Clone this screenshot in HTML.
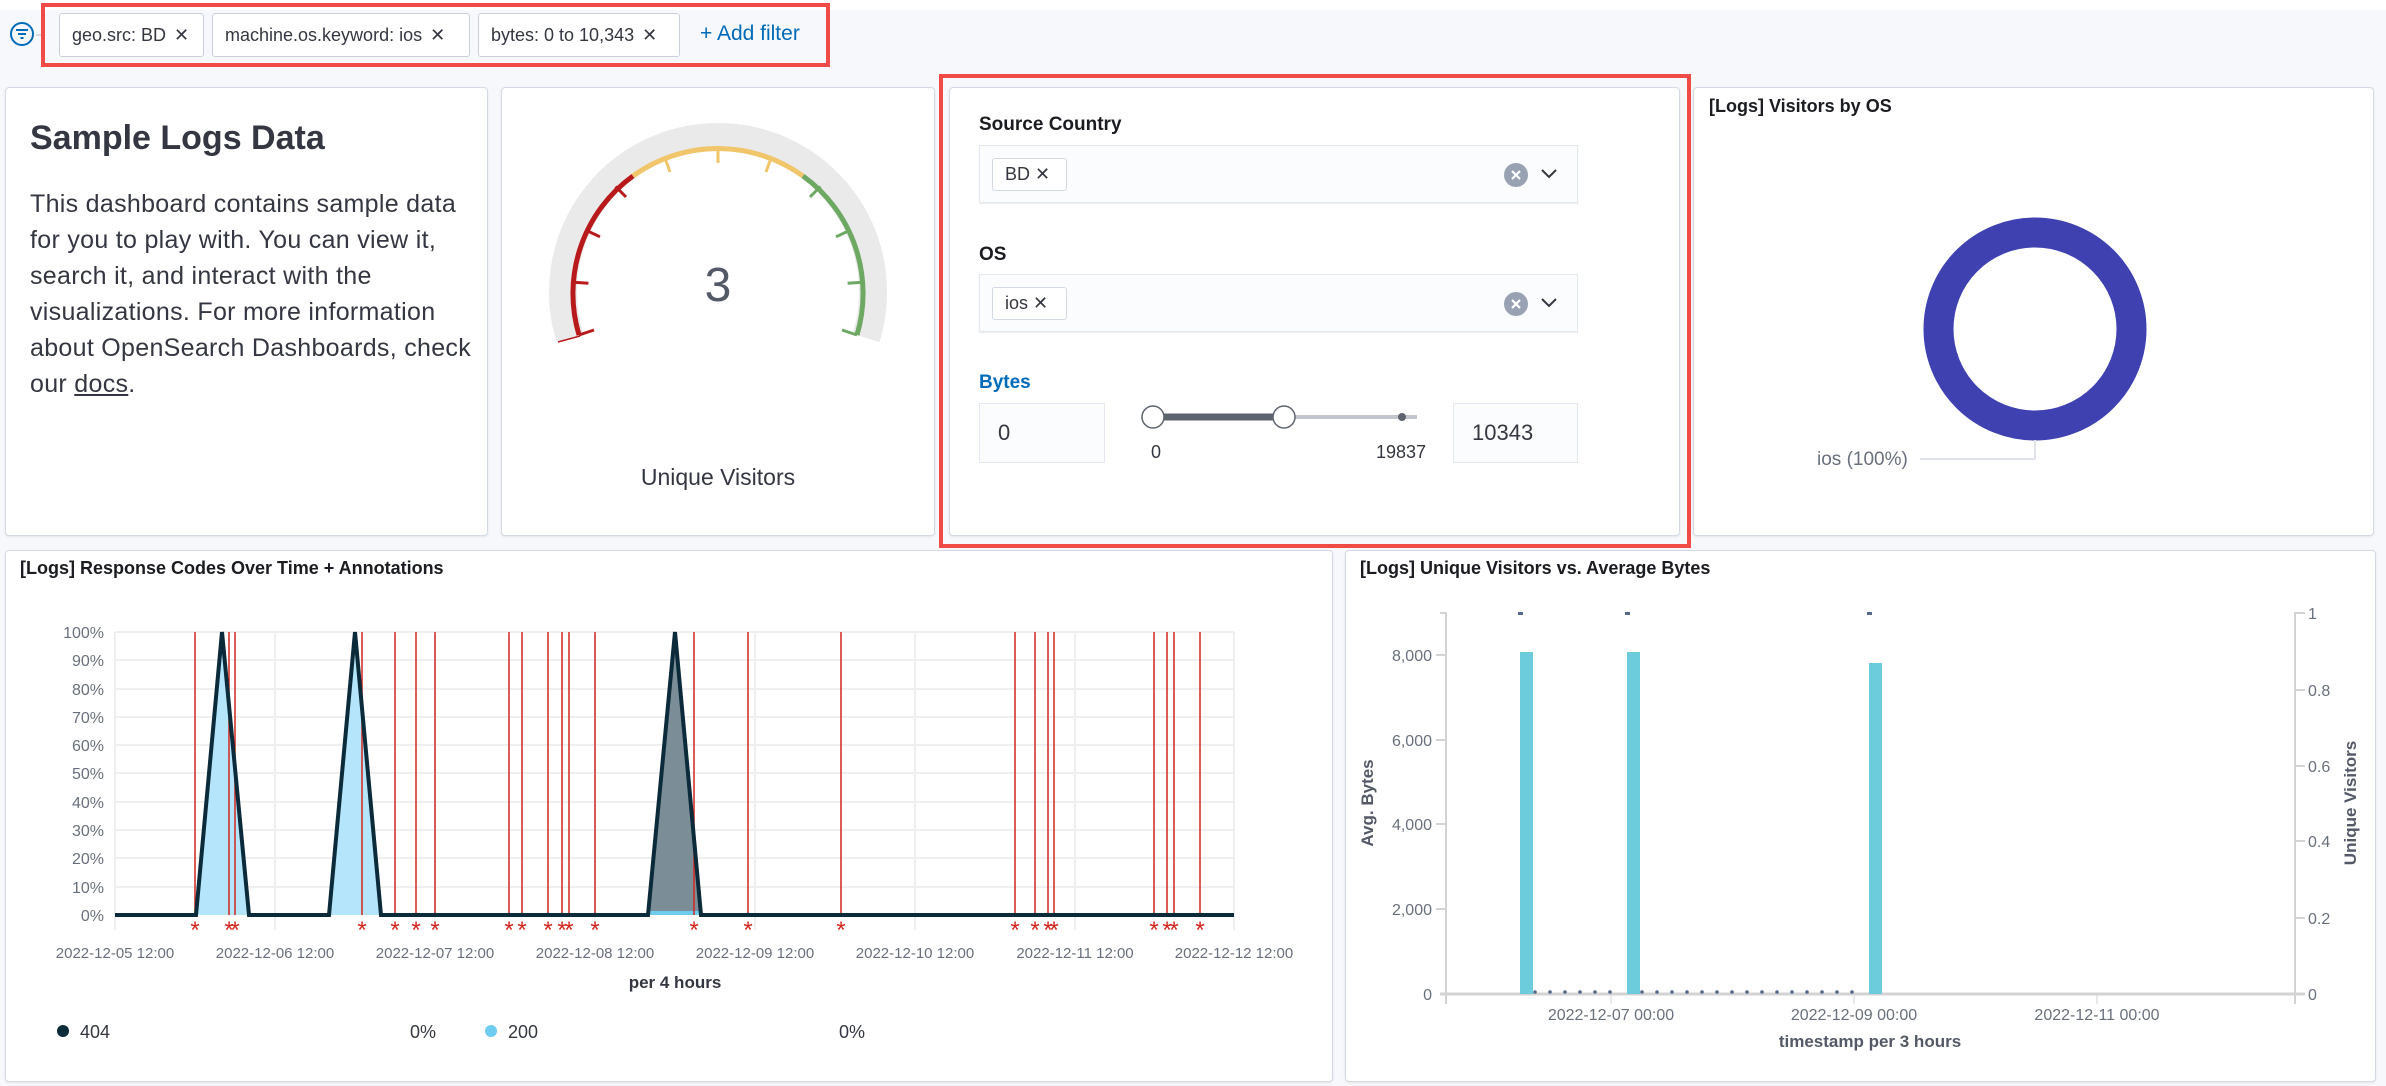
<!DOCTYPE html>
<html><head><meta charset="utf-8">
<style>
*{margin:0;padding:0;box-sizing:border-box}
body{width:2386px;height:1086px;background:#f7f8fc;font-family:"Liberation Sans",sans-serif;color:#343741;position:relative;overflow:hidden}
.abs{position:absolute}
.panel{position:absolute;background:#fff;border:1px solid #d3dae6;border-radius:4px;box-shadow:0 1px 2px rgba(0,0,0,.08)}
.pill{position:absolute;top:13px;height:44px;background:#fff;border:1px solid #c9d0dc;border-radius:3px;font-size:18px;line-height:42px;padding-left:12px;color:#343741;white-space:nowrap}
.pill span{margin-left:8px}
.ptitle{position:absolute;font-size:18px;font-weight:bold;color:#1a1c21}
.combo{position:absolute;left:979px;width:599px;height:58px;background:#fbfcfd;border:1px solid #e3e7ef;box-shadow:0 1px 1px rgba(0,0,0,.08)}
.tag{position:absolute;left:12px;top:12px;width:75px;height:33px;border:1px solid #d3dae6;background:#fff;border-radius:3px;font-size:18px;line-height:31px;padding-left:12px}
.inp{position:absolute;top:403px;height:60px;background:#fbfcfd;border:1px solid #e3e7ef;font-size:22px;line-height:58px;padding-left:18px}
.lbl{position:absolute;font-size:19px;font-weight:bold;color:#1a1c21}
</style></head><body>
<div class="abs" style="left:0;top:0;width:2386px;height:10px;background:#fff"></div>
<svg class="abs" style="left:8px;top:20px" width="28" height="28" viewBox="0 0 28 28"><circle cx="14" cy="14" r="11" fill="none" stroke="#006bb8" stroke-width="2"/><path d="M8 10h12M10 14h8M12.5 18h3" stroke="#006bb8" stroke-width="2"/></svg>
<div class="abs" style="left:36px;top:34px;width:8px;height:2px;background:#d3dae6"></div>
<div class="abs" style="left:41px;top:3px;width:789px;height:64px;border:4px solid #f04b46"></div>
<div class="pill" style="left:59px;width:145px">geo.src: BD<span>✕</span></div>
<div class="pill" style="left:212px;width:258px">machine.os.keyword: ios<span>✕</span></div>
<div class="pill" style="left:478px;width:202px">bytes: 0 to 10,343<span>✕</span></div>
<div class="abs" style="left:700px;top:22px;font-size:21px;color:#006bb8">+ Add filter</div>

<div class="panel" style="left:5px;top:87px;width:483px;height:449px"></div>
<div class="abs" style="left:30px;top:119px;font-size:34px;font-weight:bold;color:#343741">Sample Logs Data</div>
<div class="abs" style="left:30px;top:186px;width:460px;font-size:25px;letter-spacing:0.3px;line-height:36px;color:#343741;white-space:nowrap">This dashboard contains sample data<br>for you to play with. You can view it,<br>search it, and interact with the<br>visualizations. For more information<br>about OpenSearch Dashboards, check<br>our <u>docs</u>.</div>

<div class="panel" style="left:501px;top:87px;width:434px;height:449px"></div>
<svg class="abs" style="left:0;top:0" width="950" height="540">
<path d="M 570 338 A 155 155 0 1 1 866 338" fill="none" stroke="#eaeaea" stroke-width="28"/>
<path d="M 579 335 A 145 145 0 0 1 633 176" fill="none" stroke="#b8191b" stroke-width="5"/>
<path d="M 633 176 A 145 145 0 0 1 803 176" fill="none" stroke="#f1c66a" stroke-width="5"/>
<path d="M 803 176 A 145 145 0 0 1 857 335" fill="none" stroke="#6ea964" stroke-width="5"/>
<g stroke-width="3">
<line x1="579" y1="335" x2="594" y2="330" stroke="#b8191b"/>
<line x1="573.4" y1="282.2" x2="588.4" y2="283.3" stroke="#b8191b"/>
<line x1="586.5" y1="230.5" x2="600" y2="236.8" stroke="#b8191b"/>
<line x1="615.6" y1="186.5" x2="626" y2="197" stroke="#b8191b"/>
<line x1="665" y1="158" x2="670" y2="172" stroke="#f1c66a"/>
<line x1="718" y1="148" x2="718" y2="163" stroke="#f1c66a"/>
<line x1="771" y1="158" x2="766" y2="172" stroke="#f1c66a"/>
<line x1="820.4" y1="186.5" x2="810" y2="197" stroke="#6ea964"/>
<line x1="849.5" y1="230.5" x2="836" y2="236.8" stroke="#6ea964"/>
<line x1="862.6" y1="282.2" x2="847.6" y2="283.3" stroke="#6ea964"/>
<line x1="857" y1="335" x2="842" y2="330" stroke="#6ea964"/>
</g>
<line x1="558" y1="342" x2="580" y2="336" stroke="#b8191b" stroke-width="1.5"/>
<text x="718" y="301" text-anchor="middle" font-family="Liberation Sans" font-size="48" fill="#535966">3</text>
<text x="718" y="485" text-anchor="middle" font-family="Liberation Sans" font-size="23" fill="#343741">Unique Visitors</text>
</svg>

<div class="panel" style="left:949px;top:87px;width:731px;height:449px"></div>
<div class="abs" style="left:939px;top:74px;width:752px;height:474px;border:4px solid #f04b46"></div>
<div class="lbl" style="left:979px;top:114px">Source Country</div>
<div class="combo" style="top:145px"><div class="tag">BD ✕</div></div>
<div class="lbl" style="left:979px;top:244px">OS</div>
<div class="combo" style="top:274px"><div class="tag">ios ✕</div></div>
<svg class="abs" style="left:1500px;top:150px" width="70" height="190">
<circle cx="16" cy="25" r="12" fill="#98a2b3"/><path d="M12 21l8 8M20 21l-8 8" stroke="#fff" stroke-width="2.2"/>
<path d="M42 20l7 7 7-7" fill="none" stroke="#343741" stroke-width="2"/>
<circle cx="16" cy="154" r="12" fill="#98a2b3"/><path d="M12 150l8 8M20 150l-8 8" stroke="#fff" stroke-width="2.2"/>
<path d="M42 149l7 7 7-7" fill="none" stroke="#343741" stroke-width="2"/>
</svg>
<div class="abs" style="left:979px;top:372px;font-size:19px;font-weight:bold;color:#006bb8">Bytes</div>
<div class="inp" style="left:979px;width:126px">0</div>
<div class="inp" style="left:1453px;width:125px">10343</div>
<svg class="abs" style="left:1130px;top:395px" width="300" height="70">
<line x1="23" y1="22" x2="287" y2="22" stroke="#c2c5cc" stroke-width="4"/>
<line x1="23" y1="22" x2="154" y2="22" stroke="#5e646f" stroke-width="7"/>
<circle cx="272" cy="22" r="4" fill="#5e646f"/>
<circle cx="23" cy="22" r="11" fill="#fff" stroke="#5e646f" stroke-width="1.5"/>
<circle cx="154" cy="22" r="11" fill="#fff" stroke="#5e646f" stroke-width="1.5"/>
<text x="26" y="63" text-anchor="middle" font-family="Liberation Sans" font-size="18" fill="#343741">0</text>
<text x="271" y="63" text-anchor="middle" font-family="Liberation Sans" font-size="18" fill="#343741">19837</text>
</svg>

<div class="panel" style="left:1693px;top:87px;width:681px;height:449px"></div>
<div class="ptitle" style="left:1709px;top:96px">[Logs] Visitors by OS</div>
<svg class="abs" style="left:1800px;top:200px" width="400" height="280">
<circle cx="235" cy="129" r="96.5" fill="none" stroke="#3f41b1" stroke-width="30"/>
<path d="M235 240V259H120" fill="none" stroke="#e0e3ea" stroke-width="2"/>
<text x="17" y="265" font-family="Liberation Sans" font-size="19" fill="#69707d">ios (100%)</text>
</svg>

<div class="panel" style="left:5px;top:550px;width:1328px;height:532px"></div>
<div class="ptitle" style="left:20px;top:558px">[Logs] Response Codes Over Time + Annotations</div>
<svg class="abs" style="left:0;top:540px" width="1340" height="546" font-family="Liberation Sans">
<g stroke="#efefef" stroke-width="2">
<line x1="115" y1="92" x2="1234" y2="92"/><line x1="115" y1="120" x2="1234" y2="120"/><line x1="115" y1="149" x2="1234" y2="149"/><line x1="115" y1="177" x2="1234" y2="177"/><line x1="115" y1="205" x2="1234" y2="205"/><line x1="115" y1="233" x2="1234" y2="233"/><line x1="115" y1="262" x2="1234" y2="262"/><line x1="115" y1="290" x2="1234" y2="290"/><line x1="115" y1="318" x2="1234" y2="318"/><line x1="115" y1="347" x2="1234" y2="347"/>
<line x1="115" y1="92" x2="115" y2="390"/><line x1="275" y1="92" x2="275" y2="390"/><line x1="435" y1="92" x2="435" y2="390"/><line x1="595" y1="92" x2="595" y2="390"/><line x1="755" y1="92" x2="755" y2="390"/><line x1="915" y1="92" x2="915" y2="390"/><line x1="1075" y1="92" x2="1075" y2="390"/><line x1="1234" y1="92" x2="1234" y2="390"/>
</g>
<g font-size="16" fill="#69707d" text-anchor="end">
<text x="104" y="98">100%</text><text x="104" y="126">90%</text><text x="104" y="155">80%</text><text x="104" y="183">70%</text><text x="104" y="211">60%</text><text x="104" y="239">50%</text><text x="104" y="268">40%</text><text x="104" y="296">30%</text><text x="104" y="324">20%</text><text x="104" y="353">10%</text><text x="104" y="381">0%</text>
</g>
<polygon points="196,375 222,92 249,375" fill="#b5e5fb"/>
<polygon points="329,375 355,92 381,375" fill="#b5e5fb"/>
<polygon points="648,375 675,92 701,375" fill="#7b8e98"/>
<rect x="648" y="371" width="53" height="4" fill="#6dccf0"/>
<g stroke="#d1261e" stroke-width="1.5">
<line x1="195" y1="92" x2="195" y2="375"/><line x1="229" y1="92" x2="229" y2="375"/><line x1="235" y1="92" x2="235" y2="375"/><line x1="362" y1="92" x2="362" y2="375"/><line x1="395" y1="92" x2="395" y2="375"/><line x1="416" y1="92" x2="416" y2="375"/><line x1="435" y1="92" x2="435" y2="375"/><line x1="509" y1="92" x2="509" y2="375"/><line x1="522" y1="92" x2="522" y2="375"/><line x1="548" y1="92" x2="548" y2="375"/><line x1="562" y1="92" x2="562" y2="375"/><line x1="569" y1="92" x2="569" y2="375"/><line x1="595" y1="92" x2="595" y2="375"/><line x1="694" y1="92" x2="694" y2="375"/><line x1="748" y1="92" x2="748" y2="375"/><line x1="841" y1="92" x2="841" y2="375"/><line x1="1015" y1="92" x2="1015" y2="375"/><line x1="1035" y1="92" x2="1035" y2="375"/><line x1="1048" y1="92" x2="1048" y2="375"/><line x1="1054" y1="92" x2="1054" y2="375"/><line x1="1154" y1="92" x2="1154" y2="375"/><line x1="1167" y1="92" x2="1167" y2="375"/><line x1="1174" y1="92" x2="1174" y2="375"/><line x1="1200" y1="92" x2="1200" y2="375"/>
</g>
<polyline points="115,375 196,375 222,92 249,375 329,375 355,92 381,375 648,375 675,92 701,375 1234,375" fill="none" stroke="#0b2a3a" stroke-width="4"/>
<g fill="#d1261e" font-size="24" text-anchor="middle">
<text x="195" y="398">*</text><text x="229" y="398">*</text><text x="235" y="398">*</text><text x="362" y="398">*</text><text x="395" y="398">*</text><text x="416" y="398">*</text><text x="435" y="398">*</text><text x="509" y="398">*</text><text x="522" y="398">*</text><text x="548" y="398">*</text><text x="562" y="398">*</text><text x="569" y="398">*</text><text x="595" y="398">*</text><text x="694" y="398">*</text><text x="748" y="398">*</text><text x="841" y="398">*</text><text x="1015" y="398">*</text><text x="1035" y="398">*</text><text x="1048" y="398">*</text><text x="1054" y="398">*</text><text x="1154" y="398">*</text><text x="1167" y="398">*</text><text x="1174" y="398">*</text><text x="1200" y="398">*</text>
</g>
<g font-size="15" fill="#69707d" text-anchor="middle">
<text x="115" y="418">2022-12-05 12:00</text><text x="275" y="418">2022-12-06 12:00</text><text x="435" y="418">2022-12-07 12:00</text><text x="595" y="418">2022-12-08 12:00</text><text x="755" y="418">2022-12-09 12:00</text><text x="915" y="418">2022-12-10 12:00</text><text x="1075" y="418">2022-12-11 12:00</text><text x="1234" y="418">2022-12-12 12:00</text>
</g>
<text x="675" y="448" text-anchor="middle" font-size="17" font-weight="bold" fill="#343741">per 4 hours</text>
<circle cx="63" cy="491" r="6" fill="#0b2a3a"/><text x="80" y="498" font-size="18" fill="#343741">404</text>
<text x="436" y="498" text-anchor="end" font-size="18" fill="#343741">0%</text>
<circle cx="491" cy="491" r="6" fill="#6dccf0"/><text x="508" y="498" font-size="18" fill="#343741">200</text>
<text x="865" y="498" text-anchor="end" font-size="18" fill="#343741">0%</text>
</svg>

<div class="panel" style="left:1345px;top:550px;width:1031px;height:532px"></div>
<div class="ptitle" style="left:1360px;top:558px">[Logs] Unique Visitors vs. Average Bytes</div>
<svg class="abs" style="left:1330px;top:540px" width="1056" height="546" font-family="Liberation Sans">
<g stroke="#d3d3d3" stroke-width="2" fill="none">
<path d="M110 73H116V464"/><path d="M975 73H965V464"/>
<line x1="106" y1="115" x2="116" y2="115"/><line x1="106" y1="200" x2="116" y2="200"/><line x1="106" y1="284" x2="116" y2="284"/><line x1="106" y1="369" x2="116" y2="369"/>
<line x1="965" y1="150" x2="975" y2="150"/><line x1="965" y1="226" x2="975" y2="226"/><line x1="965" y1="301" x2="975" y2="301"/><line x1="965" y1="378" x2="975" y2="378"/>
<line x1="281" y1="454" x2="281" y2="464" stroke-width="1"/><line x1="524" y1="454" x2="524" y2="464" stroke-width="1"/><line x1="767" y1="454" x2="767" y2="464" stroke-width="1"/>
</g>
<line x1="110" y1="454" x2="975" y2="454" stroke="#d3d3d3" stroke-width="3"/>
<rect x="190" y="112" width="13" height="342" fill="#6dccdc"/>
<rect x="297" y="112" width="13" height="342" fill="#6dccdc"/>
<rect x="539" y="123" width="13" height="331" fill="#6dccdc"/>
<g fill="#54698c"><rect x="188" y="72" width="5" height="3"/><rect x="295" y="72" width="5" height="3"/><rect x="537" y="72" width="5" height="3"/></g>
<g fill="#54698c">
<circle cx="205" cy="452" r="1.8"/><circle cx="220" cy="452" r="1.8"/><circle cx="235" cy="452" r="1.8"/><circle cx="250" cy="452" r="1.8"/><circle cx="265" cy="452" r="1.8"/><circle cx="280" cy="452" r="1.8"/>
<circle cx="312" cy="452" r="1.8"/><circle cx="327" cy="452" r="1.8"/><circle cx="342" cy="452" r="1.8"/><circle cx="357" cy="452" r="1.8"/><circle cx="372" cy="452" r="1.8"/><circle cx="387" cy="452" r="1.8"/><circle cx="402" cy="452" r="1.8"/><circle cx="417" cy="452" r="1.8"/><circle cx="432" cy="452" r="1.8"/><circle cx="447" cy="452" r="1.8"/><circle cx="462" cy="452" r="1.8"/><circle cx="477" cy="452" r="1.8"/><circle cx="492" cy="452" r="1.8"/><circle cx="507" cy="452" r="1.8"/><circle cx="522" cy="452" r="1.8"/>
</g>
<g font-size="16" fill="#69707d" text-anchor="end">
<text x="102" y="121">8,000</text><text x="102" y="206">6,000</text><text x="102" y="290">4,000</text><text x="102" y="375">2,000</text><text x="102" y="460">0</text>
</g>
<g font-size="16" fill="#69707d">
<text x="978" y="79">1</text><text x="978" y="156">0.8</text><text x="978" y="232">0.6</text><text x="978" y="307">0.4</text><text x="978" y="384">0.2</text><text x="978" y="460">0</text>
</g>
<g font-size="16" fill="#69707d" text-anchor="middle">
<text x="281" y="480">2022-12-07 00:00</text><text x="524" y="480">2022-12-09 00:00</text><text x="767" y="480">2022-12-11 00:00</text>
</g>
<text x="540" y="507" text-anchor="middle" font-size="17" font-weight="bold" fill="#535966">timestamp per 3 hours</text>
<text transform="translate(43,263) rotate(-90)" text-anchor="middle" font-size="17" font-weight="bold" fill="#535966">Avg. Bytes</text>
<text transform="translate(1026,263) rotate(-90)" text-anchor="middle" font-size="17" font-weight="bold" fill="#535966">Unique Visitors</text>
</svg>
</body></html>
